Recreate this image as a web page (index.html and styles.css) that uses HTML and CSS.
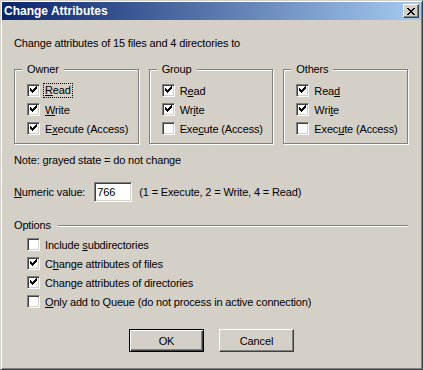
FILE: index.html
```html
<!DOCTYPE html>
<html lang="en">
<head>
    <meta charset="UTF-8">
    <title>Change Attributes</title>
    <link rel="stylesheet" href="styles.css">
</head>
<body>

<div class="window">
    <div class="titlebar">
        <span class="title">Change Attributes</span>
        <span class="close-btn">
            <svg width="8" height="7" viewBox="0 0 8 7"><path d="M0 0h2v1H0zM6 0h2v1H6zM1 1h2v1H1zM5 1h2v1H5zM2 2h4v1H2zM3 3h2v1H3zM2 4h4v1H2zM1 5h2v1H1zM5 5h2v1H5zM0 6h2v1H0zM6 6h2v1H6z"/></svg>
        </span>
    </div>

    <div class="content">
        <p class="intro">Change attributes of 15 files and 4 directories to</p>

        <div class="groups">
            <fieldset class="group">
                <legend>Owner</legend>
                <label class="check"><span class="box checked"></span><span class="focus"><u>R</u>ead</span></label>
                <label class="check"><span class="box checked"></span><span><u>W</u>rite</span></label>
                <label class="check"><span class="box checked"></span><span>E<u>x</u>ecute (Access)</span></label>
            </fieldset>
            <fieldset class="group">
                <legend>Group</legend>
                <label class="check"><span class="box checked"></span><span>R<u>e</u>ad</span></label>
                <label class="check"><span class="box checked"></span><span>Wr<u>i</u>te</span></label>
                <label class="check"><span class="box"></span><span>Exe<u>c</u>ute (Access)</span></label>
            </fieldset>
            <fieldset class="group">
                <legend>Others</legend>
                <label class="check"><span class="box checked"></span><span>Rea<u>d</u></span></label>
                <label class="check"><span class="box checked"></span><span>Wri<u>t</u>e</span></label>
                <label class="check"><span class="box"></span><span>Exec<u>u</u>te (Access)</span></label>
            </fieldset>
        </div>

        <p class="note">Note: grayed state = do not change</p>

        <div class="numeric">
            <label for="numValue"><u>N</u>umeric value:</label>
            <input type="text" id="numValue" class="num-input" value="766">
            <span class="hint">(1 = Execute, 2 = Write, 4 = Read)</span>
        </div>

        <div class="section-head">
            <span>Options</span>
            <span class="rule"></span>
        </div>

        <div class="options">
            <label class="check"><span class="box"></span><span>Include <u>s</u>ubdirectories</span></label>
            <label class="check"><span class="box checked"></span><span>C<u>h</u>ange attributes of files</span></label>
            <label class="check"><span class="box checked"></span><span>Chan<u>g</u>e attributes of directories</span></label>
            <label class="check"><span class="box"></span><span><u>O</u>nly add to Queue (do not process in active connection)</span></label>
        </div>

        <div class="buttons">
            <button class="btn default">OK</button>
            <button class="btn">Cancel</button>
        </div>
    </div>
</div>

</body>
</html>
```

FILE: styles.css
```css
body {
    margin: 0;
    font-family: "Liberation Sans", Arial, sans-serif;
    font-size: 11px;
    letter-spacing: -0.15px;
    color: #000;
    background-color: #d4d0c8;
}

.window {
    width: 423px;
    height: 370px;
    box-sizing: border-box;
    background-color: #d4d0c8;
    border: 1px solid;
    border-color: #d4d0c8 #404040 #404040 #d4d0c8;
    box-shadow: inset 1px 1px 0 #fff, inset -1px -1px 0 #808080;
    padding: 1px;
}

.titlebar {
    height: 18px;
    display: flex;
    align-items: center;
    justify-content: space-between;
    background: linear-gradient(to right, #0a246a, #a6caf0);
    padding: 0 2px;
}

.title {
    color: #fff;
    font-weight: bold;
    font-size: 12px;
    letter-spacing: 0;
}

.close-btn {
    width: 16px;
    height: 14px;
    box-sizing: border-box;
    display: flex;
    align-items: center;
    justify-content: center;
    background-color: #d4d0c8;
    border-top: 1px solid #fff;
    border-left: 1px solid #fff;
    border-right: 1px solid #404040;
    border-bottom: 1px solid #404040;
    box-shadow: inset -1px -1px 0 #808080;
}

.content {
    padding: 17px 13px 0 12px;
}

.intro {
    margin: 0;
    line-height: 13px;
}

.groups {
    display: flex;
    gap: 10px;
    margin-top: 12px;
}

.group {
    width: 125px;
    box-sizing: border-box;
    min-width: 0;
    margin: 0;
    padding: 5px 4px 5px 12px;
    border: 1px solid #808080;
    box-shadow: inset 1px 1px 0 #fff, 1px 1px 0 #fff;
}

.group legend {
    padding: 0 5px;
    margin-left: -5px;
    line-height: 14px;
    background-color: #d4d0c8;
}

.check {
    display: flex;
    align-items: center;
    height: 19px;
    white-space: nowrap;
}

.box {
    width: 13px;
    height: 13px;
    box-sizing: border-box;
    flex-shrink: 0;
    margin-right: 5px;
    background-color: #fff;
    border-top: 1px solid #808080;
    border-left: 1px solid #808080;
    border-right: 1px solid #fff;
    border-bottom: 1px solid #fff;
    box-shadow: inset 1px 1px 0 #404040, inset -1px -1px 0 #d4d0c8;
}

.box.checked::after {
    content: "";
    display: block;
    width: 1px;
    height: 3px;
    margin: 3px 0 0 2px;
    background-color: #000;
    box-shadow: 1px 1px 0 #000, 2px 2px 0 #000, 3px 1px 0 #000, 4px 0 0 #000,
                5px -1px 0 #000, 6px -2px 0 #000;
}

.focus {
    border: 1px dotted #000;
    padding: 0 1px;
    margin-left: -2px;
    line-height: 13px;
}

.note {
    margin: 10px 0 0;
    line-height: 13px;
}

.numeric {
    display: flex;
    align-items: center;
    margin-top: 15px;
}

.num-input {
    width: 38px;
    height: 20px;
    box-sizing: border-box;
    margin: 0 7px 0 9px;
    padding: 0 2px;
    font-family: inherit;
    font-size: 11px;
    letter-spacing: inherit;
    background-color: #fff;
    border-top: 1px solid #808080;
    border-left: 1px solid #808080;
    border-right: 1px solid #fff;
    border-bottom: 1px solid #fff;
    box-shadow: inset 1px 1px 0 #404040, inset -1px -1px 0 #d4d0c8;
    outline: none;
}

.section-head {
    display: flex;
    align-items: center;
    margin-top: 17px;
    line-height: 13px;
}

.rule {
    flex: 1;
    height: 1px;
    margin-left: 7px;
    background-color: #808080;
    border-bottom: 1px solid #fff;
}

.options {
    margin-top: 3px;
    padding-left: 13px;
}

.buttons {
    display: flex;
    justify-content: center;
    gap: 15px;
    margin-top: 18px;
    padding-left: 1px;
}

.btn {
    width: 75px;
    height: 23px;
    box-sizing: border-box;
    font-family: inherit;
    font-size: 11px;
    letter-spacing: inherit;
    color: #000;
    background-color: #d4d0c8;
    border-top: 1px solid #fff;
    border-left: 1px solid #fff;
    border-right: 1px solid #404040;
    border-bottom: 1px solid #404040;
    box-shadow: inset -1px -1px 0 #808080;
    padding: 0;
}

.btn.default {
    border: 1px solid #000;
    box-shadow: inset 1px 1px 0 #fff, inset -1px -1px 0 #404040, inset -2px -2px 0 #808080;
}
```
